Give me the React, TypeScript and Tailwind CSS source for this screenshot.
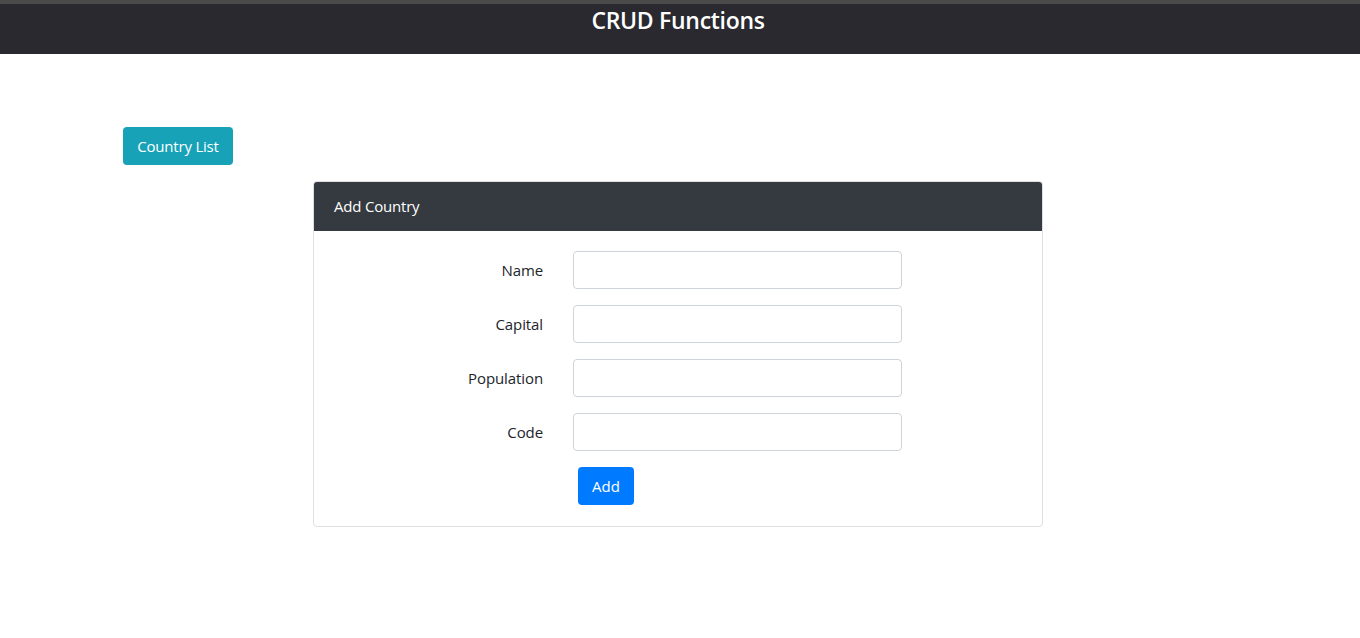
import { useState } from "react";

const fields = ["Name", "Capital", "Population", "Code"];

export default function App() {
  const [values, setValues] = useState<Record<string, string>>({});

  return (
    <div
      className="min-h-[638px] bg-white text-[#212529]"
      style={{ fontFamily: '"Open Sans", "Noto Sans", Arial, sans-serif' }}
    >
      <header className="border-t-4 border-[#4a4a4a] bg-[#29292f]">
        <h1 className="h-[50px] pt-0 text-center text-[23px] font-semibold leading-[32px] tracking-[-0.3px] text-white pr-[4px]">
          CRUD Functions
        </h1>
      </header>

      <main className="pt-[73px]">
        <div className="pl-[123px]">
          <button
            type="button"
            className="h-[38px] w-[110px] rounded-[4px] bg-[#17a2b8] text-[15px] tracking-[-0.2px] text-white"
          >
            Country List
          </button>
        </div>

        <section className="mx-auto mt-[16px] w-[730px] translate-x-[-2px] rounded-[4px] border border-[#dfdfdf]">
          <div className="flex h-[49px] items-center rounded-t-[3px] bg-[#343a40] px-[20px] text-[15px] tracking-[-0.2px] text-white">
            Add Country
          </div>
          <form
            className="flex flex-col gap-[16px] pt-[20px] pb-[21px]"
            onSubmit={(e) => e.preventDefault()}
          >
            {fields.map((f) => (
              <div key={f} className="flex items-center">
                <label className="w-[229px] text-right text-[15px] tracking-[-0.1px]">
                  {f}
                </label>
                <input
                  value={values[f] ?? ""}
                  onChange={(e) => setValues({ ...values, [f]: e.target.value })}
                  className="ml-[30px] h-[38px] w-[329px] rounded-[4px] border border-[#ced4da] px-3 outline-none"
                />
              </div>
            ))}
            <div className="pl-[264px]">
              <button
                type="submit"
                className="h-[38px] w-[56px] rounded-[4px] bg-[#007bff] text-[15px] text-white"
              >
                Add
              </button>
            </div>
          </form>
        </section>
      </main>
    </div>
  );
}
